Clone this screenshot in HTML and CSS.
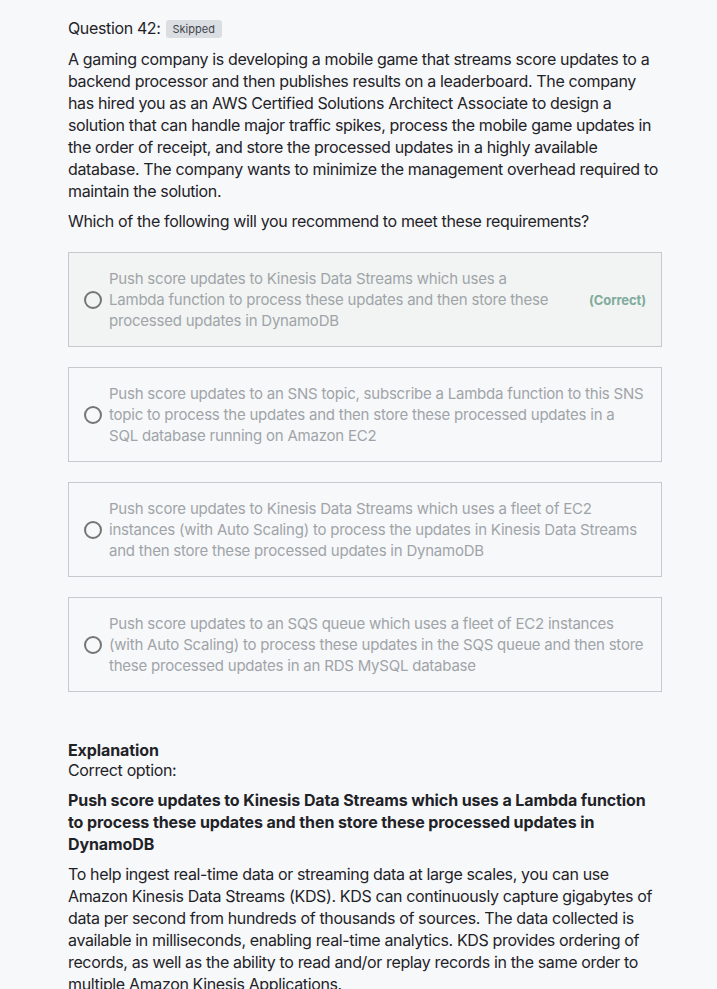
FILE: index.html
```html
<!DOCTYPE html>
<html>
<head>
<meta charset="utf-8">
<link rel="stylesheet" href="styles.css">
</head>
<body>
<main class="page">
  <div class="q-head">Question 42: <span class="badge">Skipped</span></div>
  <p class="q-text">A gaming company is developing a mobile game that streams score updates to a backend processor and then publishes results on a leaderboard. The company has hired you as an AWS Certified Solutions Architect Associate to design a solution that can handle major traffic spikes, process the mobile game updates in the order of receipt, and store the processed updates in a highly available database. The company wants to minimize the management overhead required to maintain the solution.</p>
  <p class="q-ask">Which of the following will you recommend to meet these requirements?</p>

  <div class="options">
    <div class="option correct">
      <span class="radio"></span>
      <span class="opt-text">Push score updates to Kinesis Data Streams which uses a Lambda function to process these updates and then store these processed updates in DynamoDB</span>
      <span class="tag">(Correct)</span>
    </div>
    <div class="option">
      <span class="radio"></span>
      <span class="opt-text">Push score updates to an SNS topic, subscribe a Lambda function to this SNS topic to process the updates and then store these processed updates in a SQL database running on Amazon EC2</span>
    </div>
    <div class="option">
      <span class="radio"></span>
      <span class="opt-text">Push score updates to Kinesis Data Streams which uses a fleet of EC2 instances (with Auto Scaling) to process the updates in Kinesis Data Streams and then store these processed updates in DynamoDB</span>
    </div>
    <div class="option">
      <span class="radio"></span>
      <span class="opt-text">Push score updates to an SQS queue which uses a fleet of EC2 instances (with Auto Scaling) to process these updates in the SQS queue and then store these processed updates in an RDS MySQL database</span>
    </div>
  </div>

  <section class="explanation">
    <div class="ex-title">Explanation</div>
    <div class="ex-sub">Correct option:</div>
    <p class="ex-bold">Push score updates to Kinesis Data Streams which uses a Lambda function to process these updates and then store these processed updates in DynamoDB</p>
    <p class="ex-text">To help ingest real-time data or streaming data at large scales, you can use Amazon Kinesis Data Streams (KDS). KDS can continuously capture gigabytes of data per second from hundreds of thousands of sources. The data collected is available in milliseconds, enabling real-time analytics. KDS provides ordering of records, as well as the ability to read and/or replay records in the same order to multiple Amazon Kinesis Applications.</p>
  </section>
</main>
</body>
</html>
```

FILE: styles.css
```css
html, body {
  margin: 0;
  padding: 0;
  background: #f7f8fa;
}
body {
  font-family: Inter, "Noto Sans", sans-serif;
  color: #1f2328;
  font-size: 16px;
  line-height: 22px;
  letter-spacing: -0.36px;
}
.page {
  width: 594px;
  margin: 0 0 0 68px;
  padding-top: 17px;
}
.q-head {
  font-size: 16px;
  line-height: 22px;
  display: flex;
  align-items: center;
  gap: 5px;
}
.badge {
  font-size: 11px;
  line-height: 18px;
  background: #dadee3;
  color: #3f444a;
  border-radius: 3px;
  padding: 0 7px;
  margin-top: 2px;
  letter-spacing: 0;
}
.q-text {
  margin: 9px 0 0;
}
.q-ask {
  margin: 8px 0 0;
}
.options {
  margin-top: 20px;
  display: flex;
  flex-direction: column;
  gap: 20px;
}
.option {
  border: 1px solid #c6cacf;
  display: flex;
  align-items: center;
  padding: 15px;
  min-height: 63px;
}
.option.correct {
  background: #f1f4f3;
}
.radio {
  flex: none;
  width: 14px;
  height: 14px;
  border: 2px solid #757575;
  border-radius: 50%;
  margin-right: 7px;
}
.opt-text {
  flex: 1;
  font-size: 15px;
  line-height: 21px;
  color: #a0a4a8;
  letter-spacing: -0.22px;
}
.tag {
  flex: none;
  font-size: 13px;
  font-weight: 700;
  color: #80ab9c;
  margin-left: 38px;
  letter-spacing: -0.1px;
}
.explanation {
  margin-top: 48px;
}
.ex-title {
  font-weight: 700;
  line-height: 20px;
  letter-spacing: -0.1px;
}
.ex-sub {
  line-height: 20px;
}
.ex-bold {
  font-weight: 700;
  margin: 9px 0 0;
  letter-spacing: -0.1px;
}
.ex-text {
  margin: 8px 0 0;
}
```
